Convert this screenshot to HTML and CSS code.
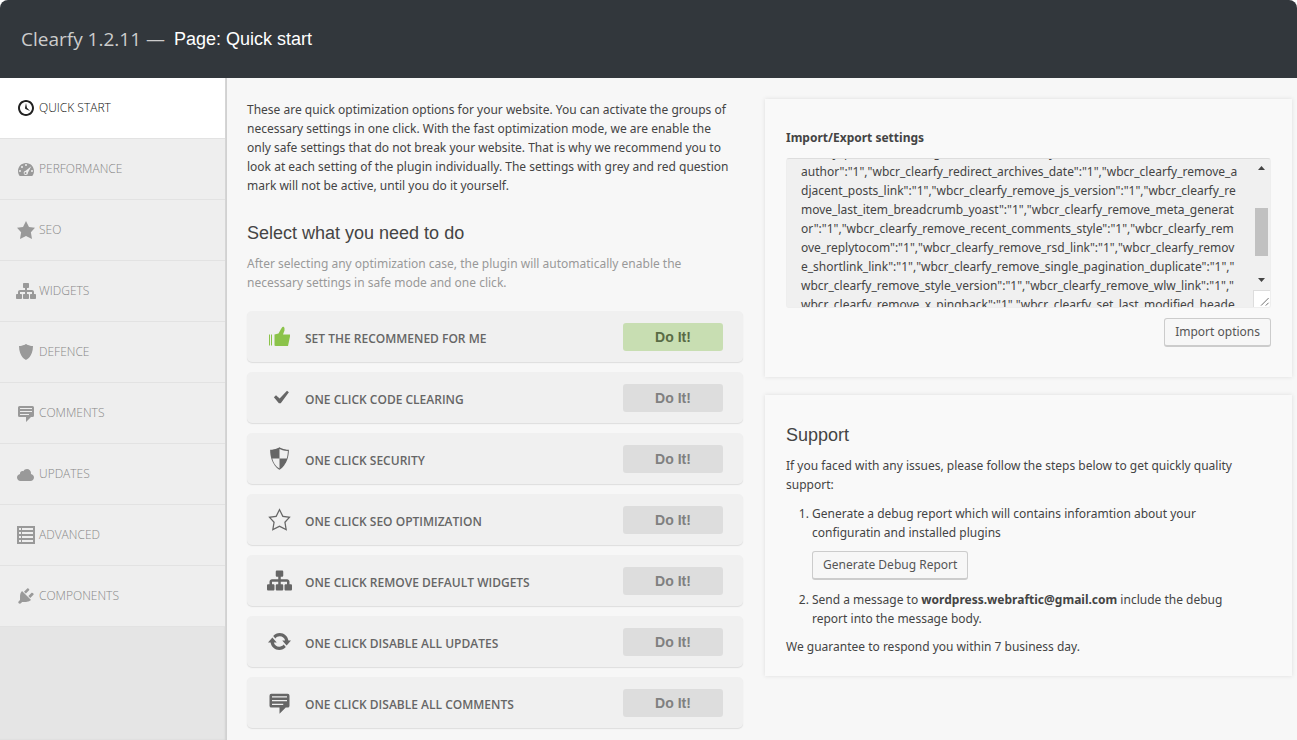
FILE: index.html
```html
<!DOCTYPE html>
<html lang="en">
<head>
<meta charset="utf-8">
<title>Clearfy – Quick start</title>
<link rel="stylesheet" href="styles.css">
</head>
<body>
<svg class="sprite" aria-hidden="true">
  <symbol id="clock" viewBox="0 0 20 20"><path d="M10 2c4.42 0 8 3.58 8 8s-3.58 8-8 8-8-3.58-8-8 3.58-8 8-8zm0 14c3.31 0 6-2.69 6-6s-2.69-6-6-6-6 2.69-6 6 2.69 6 6 6zm-.71-5.29c.07.05.14.1.23.15l-.02.02L14 13l-3.03-3.19L10 5l-.97 4.81h.01c0 .02-.01.05-.02.09S9 9.97 9 10c0 .28.1.52.29.71z"/></symbol>
  <symbol id="gauge" viewBox="0 0 20 20"><path fill-rule="evenodd" d="M3.76 17h12.48c1.1-1.37 1.76-3.11 1.76-5 0-4.42-3.58-8-8-8s-8 3.58-8 8c0 1.89.66 3.63 1.76 5zM10 5a1 1 0 1 1 0 2 1 1 0 0 1 0-2zM6 7a1 1 0 1 1 0 2 1 1 0 0 1 0-2zM4 11a1 1 0 1 1 0 2 1 1 0 0 1 0-2zM16 11a1 1 0 1 1 0 2 1 1 0 0 1 0-2zM15.300 7.300L12 13.600a2.200 2.200 0 1 1-2.300-1.900zM10 13.200a1 1 0 1 0 0 1.700 1 1 0 0 0 0-1.700z"/></symbol>
  <symbol id="star" viewBox="0 0 20 20"><path d="M10 1l3 6 6 .75-4.120 4.620L16 19l-6-3-6 3 1.130-6.630L1 7.750 7 7z"/></symbol>
  <symbol id="star-empty" viewBox="0 0 20 20"><path d="M10 1L7 7l-6 .75 4.130 4.620L4 19l6-3 6 3-1.120-6.630L19 7.750 13 7zm0 2.240l2.340 4.690 4.650.58-3.180 3.560.87 5.150L10 14.880l-4.680 2.340.87-5.150-3.180-3.560 4.650-.58z"/></symbol>
  <symbol id="network" viewBox="0 0 20 20"><path d="M18 13h1c.55 0 1 .45 1 1.010v2.980c0 .56-.45 1.010-1 1.010h-4c-.55 0-1-.45-1-1.010v-2.980c0-.56.45-1.010 1-1.010h1v-2h-5v2h1c.55 0 1 .45 1 1.010v2.980c0 .56-.45 1.010-1 1.010H8c-.55 0-1-.45-1-1.010v-2.980c0-.56.45-1.010 1-1.010h1v-2H4v2h1c.55 0 1 .45 1 1.010v2.980C6 17.550 5.550 18 5 18H1c-.55 0-1-.45-1-1.010v-2.980C0 13.450.45 13 1 13h1v-2c0-1.100.9-2 2-2h5V7H8c-.55 0-1-.45-1-1.010V3.010C7 2.450 7.450 2 8 2h4c.55 0 1 .45 1 1.010v2.980C13 6.550 12.550 7 12 7h-1v2h5c1.100 0 2 .9 2 2v2z"/></symbol>
  <symbol id="shield" viewBox="0 0 20 20"><path d="M10 2s3 2 7 2c0 11-7 14-7 14S3 15 3 4c4 0 7-2 7-2z"/></symbol>
  <symbol id="shield-half" viewBox="0 0 20 20"><path fill-rule="evenodd" d="M10 1s3 2 7.500 2c0 12-7.500 16-7.500 16S2.500 15 2.500 3C7 3 10 1 10 1zm0 1.400V10H4.200c1 4.200 3.400 6.600 5.800 7.900V10h5.800c.5-1.700.8-3.800.9-6C13.500 3.900 11 2.900 10 2.400z"/></symbol>
  <symbol id="comment" viewBox="0 0 20 20"><path fill-rule="evenodd" d="M3.500 3h13A1.500 1.500 0 0 1 18 4.500v8a1.500 1.500 0 0 1-1.500 1.500H15l-5 5v-5H3.500A1.500 1.500 0 0 1 2 12.500v-8A1.500 1.500 0 0 1 3.500 3zM4 5v1h12V5zm0 3v1h12V8zm0 3v1h9v-1z"/></symbol>
  <symbol id="cloud" viewBox="0 0 20 20"><path d="M14.900 10c1.800.2 3.100 1.700 3.100 3.500 0 1.900-1.600 3.500-3.500 3.500h-10C2.600 17 1 15.400 1 13.500 1 11.700 2.300 10.300 4.100 10 4 9.900 4 9.700 4 9.500 4 8.100 5.100 7 6.500 7c.3 0 .7.1.9.2C8.100 5.900 9.400 5 11 5c2.200 0 4 1.800 4 4 0 .4-.1.700-.1 1z"/></symbol>
  <symbol id="table" viewBox="0 0 20 20"><path fill-rule="evenodd" d="M1 1h18v18H1zM3 3v2h2V3zm3 0v2h11V3zM3 7v2h2V7zm3 0v2h11V7zM3 11v2h2v-2zm3 0v2h11v-2zM3 15v2h2v-2zm3 0v2h11v-2z"/></symbol>
  <symbol id="plug" viewBox="0 0 20 20"><path d="M13.110 4.360L9.870 7.600 8 5.730l3.240-3.240c.35-.34 1.050-.2 1.560.32.52.51.66 1.210.31 1.550zm-8 1.770l.91-1.120 9.010 9.010-1.190.84c-.71.71-2.630 1.160-3.820 1.160H6.140L4.900 17.260c-.59.59-1.540.59-2.120 0-.59-.58-.59-1.530 0-2.120l1.240-1.240v-3.880c0-1.130.4-3.190 1.090-3.890zm7.260 3.970l3.240-3.240c.34-.35 1.040-.21 1.550.31.52.51.66 1.210.31 1.550l-3.240 3.250z"/></symbol>
  <symbol id="thumb" viewBox="0 0 25 25"><path d="M2 10.500h1v11H2zM4 10.500h1v11H4zM7.500 10.500l4-1L14 5l1-1.500c.5-1.200 2.500-.8 2.500 1v2L16 10.500h7v2l-2 9.500H8.500l-1-.5z"/></symbol>
  <symbol id="check" viewBox="0 0 20 20"><path d="M16 4.500l1.500 1.200-6.500 8.800H9.500L5.500 9.800 7.200 8.200l2.900 2.600z"/></symbol>
  <symbol id="update" viewBox="0 0 20 20"><path d="M10.200 3.280c3.530 0 6.430 2.610 6.920 6h2.080l-3.500 4-3.500-4h2.320c-.45-1.970-2.210-3.450-4.320-3.450-1.450 0-2.730.71-3.540 1.780L4.950 5.660C6.230 4.200 8.110 3.280 10.200 3.280zm-.4 13.440c-3.520 0-6.430-2.610-6.920-6H.8l3.500-4c1.170 1.330 2.330 2.670 3.500 4H5.480c.45 1.970 2.210 3.450 4.320 3.450 1.450 0 2.730-.71 3.540-1.780l1.710 1.950c-1.280 1.460-3.150 2.380-5.250 2.380z"/></symbol>
</svg>
<div class="page">
  <header class="header">
    <span class="brand">Clearfy 1.2.11 —</span>
    <h1 class="page-title">Page: Quick start</h1>
  </header>
  <div class="body">
    <nav class="sidebar">
      <a class="nav-item active" href="#"><svg class="nav-icon"><use href="#clock"/></svg><span class="nav-name">QUICK START</span></a>
      <a class="nav-item" href="#"><svg class="nav-icon"><use href="#gauge"/></svg><span class="nav-name">PERFORMANCE</span></a>
      <a class="nav-item" href="#"><svg class="nav-icon"><use href="#star"/></svg><span class="nav-name">SEO</span></a>
      <a class="nav-item" href="#"><svg class="nav-icon"><use href="#network"/></svg><span class="nav-name">WIDGETS</span></a>
      <a class="nav-item" href="#"><svg class="nav-icon"><use href="#shield"/></svg><span class="nav-name">DEFENCE</span></a>
      <a class="nav-item" href="#"><svg class="nav-icon"><use href="#comment"/></svg><span class="nav-name">COMMENTS</span></a>
      <a class="nav-item" href="#"><svg class="nav-icon"><use href="#cloud"/></svg><span class="nav-name">UPDATES</span></a>
      <a class="nav-item" href="#"><svg class="nav-icon"><use href="#table"/></svg><span class="nav-name">ADVANCED</span></a>
      <a class="nav-item" href="#"><svg class="nav-icon"><use href="#plug"/></svg><span class="nav-name">COMPONENTS</span></a>
    </nav>
    <main class="main">
      <section class="options">
        <p class="intro">These are quick optimization options for your website. You can activate the groups of<br>necessary settings in one click. With the fast optimization mode, we are enable the<br>only safe settings that do not break your website. That is why we recommend you to<br>look at each setting of the plugin individually. The settings with grey and red question<br>mark will not be active, until you do it yourself.</p>
        <h2 class="heading">Select what you need to do</h2>
        <p class="hint">After selecting any optimization case, the plugin will automatically enable the<br>necessary settings in safe mode and one click.</p>
        <div class="tasks">
          <div class="task"><svg class="task-icon green"><use href="#thumb"/></svg><span class="task-name">SET THE RECOMMENED FOR ME</span><button class="do-it primary">Do It!</button></div>
          <div class="task"><svg class="task-icon"><use href="#check"/></svg><span class="task-name">ONE CLICK CODE CLEARING</span><button class="do-it">Do It!</button></div>
          <div class="task"><svg class="task-icon"><use href="#shield-half"/></svg><span class="task-name">ONE CLICK SECURITY</span><button class="do-it">Do It!</button></div>
          <div class="task"><svg class="task-icon"><use href="#star-empty"/></svg><span class="task-name">ONE CLICK SEO OPTIMIZATION</span><button class="do-it">Do It!</button></div>
          <div class="task"><svg class="task-icon"><use href="#network"/></svg><span class="task-name">ONE CLICK REMOVE DEFAULT WIDGETS</span><button class="do-it">Do It!</button></div>
          <div class="task"><svg class="task-icon"><use href="#update"/></svg><span class="task-name">ONE CLICK DISABLE ALL UPDATES</span><button class="do-it">Do It!</button></div>
          <div class="task"><svg class="task-icon"><use href="#comment"/></svg><span class="task-name">ONE CLICK DISABLE ALL COMMENTS</span><button class="do-it">Do It!</button></div>
        </div>
      </section>
      <aside class="widgets">
        <section class="card import">
          <label class="card-label" for="settings">Import/Export settings</label>
          <div class="field">
            <textarea class="settings" id="settings" spellcheck="false">clearfy_protect_author_get":"1","wbcr_clearfy_redirect_archives_
author":"1","wbcr_clearfy_redirect_archives_date":"1","wbcr_clearfy_remove_a
djacent_posts_link":"1","wbcr_clearfy_remove_js_version":"1","wbcr_clearfy_re
move_last_item_breadcrumb_yoast":"1","wbcr_clearfy_remove_meta_generat
or":"1","wbcr_clearfy_remove_recent_comments_style":"1","wbcr_clearfy_rem
ove_replytocom":"1","wbcr_clearfy_remove_rsd_link":"1","wbcr_clearfy_remov
e_shortlink_link":"1","wbcr_clearfy_remove_single_pagination_duplicate":"1","
wbcr_clearfy_remove_style_version":"1","wbcr_clearfy_remove_wlw_link":"1","
wbcr_clearfy_remove_x_pingback":"1","wbcr_clearfy_set_last_modified_heade
rs":"1"}</textarea>
            <div class="scrollbar" aria-hidden="true">
              <svg class="arrow" viewBox="0 0 7 4"><path d="M0 4h7L3.500 0z"/></svg>
              <span class="thumb"></span>
              <svg class="arrow" viewBox="0 0 7 4"><path d="M0 0h7L3.500 4z"/></svg>
              <svg class="grip" viewBox="0 0 17 17"><path d="M7.500 15.500l8-8M12.500 15.500l3-3"/></svg>
            </div>
          </div>
          <button class="button">Import options</button>
        </section>
        <section class="card support">
          <h2 class="heading">Support</h2>
          <p class="text">If you faced with any issues, please follow the steps below to get quickly quality<br>support:</p>
          <ol class="steps">
            <li>Generate a debug report which will contains inforamtion about your<br>configuratin and installed plugins
              <div class="step-action"><button class="button">Generate Debug Report</button></div></li>
            <li>Send a message to <b>wordpress.webraftic@gmail.com</b> include the debug<br>report into the message body.</li>
          </ol>
          <p class="text">We guarantee to respond you within 7 business day.</p>
        </section>
      </aside>
    </main>
  </div>
</div>
<script src="script.js"></script>
</body>
</html>
```
FILE: styles.css
```css
* { box-sizing: border-box; }
body {
  margin: 0;
  background: #fff;
  color: #444;
  font: 12px/19px "Noto Sans", "Open Sans", sans-serif;
}
h1, h2, p, ol { margin: 0; font-weight: 400; }
svg { fill: currentColor; flex: none; }
button { font-family: inherit; cursor: pointer; }
.sprite { display: none; }
.page { display: flex; flex-direction: column; height: 100vh; overflow: hidden; border-radius: 8px 8px 0 0; }
.header {
  display: flex;
  align-items: center;
  flex: none;
  gap: 9px;
  height: 78px;
  padding: 0 21px;
  background: #32373c;
}
.brand { color: #ccc; font-family: "Open Sans", sans-serif; font-size: 19px; }
.page-title { color: #fff; font: 18px/24px "Liberation Sans", Arial, sans-serif; }
.body { display: flex; flex: 1; min-height: 0; background: #f7f7f7; }
.sidebar {
  flex: none;
  width: 227px;
  background: #e5e5e5;
  box-shadow: inset -2px 0 2px #d0d0d0;
}
.nav-item {
  display: flex;
  align-items: center;
  gap: 3px;
  height: 61px;
  margin-right: 2px;
  padding: 0 16px;
  border-bottom: 1px solid #e2e2e2;
  background: #eee;
  color: #999;
  font-family: "Open Sans", sans-serif;
  font-weight: 300;
  text-decoration: none;
}
.nav-item.active { background: #fff; color: #222; }
.nav-name { padding-bottom: 2px; color: #888; }
.nav-item.active .nav-name { color: #111; }
.nav-icon { width: 20px; height: 20px; }
.main { display: flex; flex: 1; gap: 22px; min-width: 0; padding: 21px 5px 0 20px; }
.options { flex: 496 1 0; min-width: 0; padding-top: 1px; white-space: nowrap; }
.heading { color: #444; font: 18px/24px "Liberation Sans", Arial, sans-serif; }
.options .heading { margin: 26px 0 9px; }
.hint { color: #999; }
.tasks { display: flex; flex-direction: column; gap: 10px; margin-top: 19px; }
.task {
  display: flex;
  align-items: center;
  height: 51px;
  padding: 0 20px;
  border-radius: 5px;
  background: #f0f0f0;
  box-shadow: 0 1px 1px #ddd;
  color: #666;
}
.task-icon { width: 25px; height: 25px; }
.task-icon.green { color: #8bc34a; }
.task-name { flex: 1; padding: 4px 0 0 13px; font-family: "Open Sans", sans-serif; font-weight: 600; }
.do-it {
  width: 100px;
  height: 28px;
  padding: 0;
  border: 0;
  border-radius: 3px;
  background: #ddd;
  color: #808080;
  font: bold 14px/28px "Liberation Sans", Arial, sans-serif;
}
.do-it.primary { background: #c8deb2; color: #596b45; }
.widgets { display: flex; flex-direction: column; flex: 527 1 0; gap: 18px; min-width: 0; white-space: nowrap; }
.card { display: flex; flex-direction: column; padding: 28px 21px 20px; background: #f9f9f9; box-shadow: 0 0 4px #ddd; }
.import { padding-bottom: 30px; }
.card-label { padding-top: 1px; font-weight: 700; }
.field {
  display: flex;
  height: 150px;
  margin: 11px 0 10px;
  border: 1px solid #eee;
  border-top-color: #ddd;
  border-radius: 3px;
  background: #f0f0f0;
  overflow: hidden;
}
.settings {
  flex: 1;
  min-width: 0;
  height: 148px;
  padding: 0 0 0 14px;
  border: 0;
  background: none;
  color: #444;
  font: inherit;
  white-space: pre;
  overflow: hidden;
  resize: none;
  outline: 0;
}
.scrollbar { display: flex; flex-direction: column; align-items: center; flex: none; width: 17px; padding-top: 7px; color: #444; }
.arrow { width: 7px; height: 4px; }
.thumb { width: 13px; height: 48px; margin: 38px 0 22px; background: #c1c1c1; }
.grip { width: 17px; height: 17px; margin-top: auto; border: 1px solid #ddd; border-width: 1px 0 0 1px; background: #fff; stroke: #666; }
.button {
  align-self: flex-end;
  height: 29px;
  padding: 0 10px;
  border: 1px solid #ccc;
  border-bottom-width: 2px;
  border-radius: 3px;
  background: #f7f7f7;
  color: #555;
  font-size: 12px;
  line-height: 26px;
}
.support .text { margin-top: 9px; }
.steps { display: flex; flex-direction: column; gap: 10px; margin-top: 10px; padding-left: 26px; }
.step-action { margin-top: 9px; }
.step-action .button { display: block; }
```
FILE: script.js
```js
// Open the exported settings part-way down, past the first line.
document.getElementById("settings").scrollTop = 16;
```
